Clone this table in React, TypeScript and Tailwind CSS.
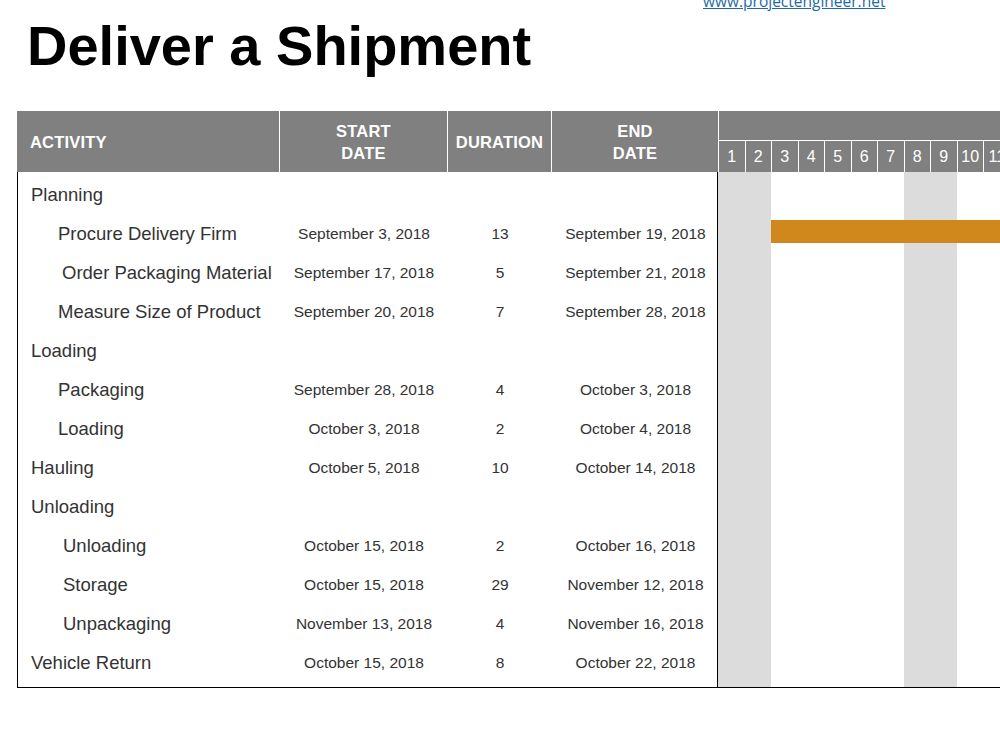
import React from "react";

type Row = {
  name: string;
  indent: string;
  start?: string;
  duration?: string;
  end?: string;
};

const rows: Row[] = [
  { name: "Planning", indent: "pl-[13px]" },
  { name: "Procure Delivery Firm", indent: "pl-[40px]", start: "September 3, 2018", duration: "13", end: "September 19, 2018" },
  { name: "Order Packaging Material", indent: "pl-[44px]", start: "September 17, 2018", duration: "5", end: "September 21, 2018" },
  { name: "Measure Size of Product", indent: "pl-[40px]", start: "September 20, 2018", duration: "7", end: "September 28, 2018" },
  { name: "Loading", indent: "pl-[13px]" },
  { name: "Packaging", indent: "pl-[40px]", start: "September 28, 2018", duration: "4", end: "October 3, 2018" },
  { name: "Loading", indent: "pl-[40px]", start: "October 3, 2018", duration: "2", end: "October 4, 2018" },
  { name: "Hauling", indent: "pl-[13px]", start: "October 5, 2018", duration: "10", end: "October 14, 2018" },
  { name: "Unloading", indent: "pl-[13px]" },
  { name: "Unloading", indent: "pl-[45px]", start: "October 15, 2018", duration: "2", end: "October 16, 2018" },
  { name: "Storage", indent: "pl-[45px]", start: "October 15, 2018", duration: "29", end: "November 12, 2018" },
  { name: "Unpackaging", indent: "pl-[45px]", start: "November 13, 2018", duration: "4", end: "November 16, 2018" },
  { name: "Vehicle Return", indent: "pl-[13px]", start: "October 15, 2018", duration: "8", end: "October 22, 2018" },
];

const days = [1, 2, 3, 4, 5, 6, 7, 8, 9, 10, 11, 12];
const weekend = [1, 2, 8, 9];

export default function App() {
  return (
    <div className="w-[1000px] h-[750px] overflow-hidden bg-white font-['Liberation_Sans',Arial,sans-serif]">
      {/* top area */}
      <div className="h-[111px] flex flex-col">
        <a
          href="#"
          className="ml-[703px] -mt-[8px] h-[19px] leading-[19px] text-[15.5px] text-[#1f6aa5] underline font-['Open_Sans',sans-serif]"
        >
          www.projectengineer.net
        </a>
        <h1 className="ml-[27px] mt-[7px] text-[56px] leading-[56px] font-bold text-black">
          Deliver a Shipment
        </h1>
      </div>

      <div className="ml-[17px] w-[983px] overflow-hidden">
        {/* header */}
        <div className="flex h-[61px] bg-[#808080] text-white font-bold text-[16.5px] tracking-[0.2px] leading-[22px]">
          <div className="w-[263px] shrink-0 border-r border-white flex items-center pl-[13px]">ACTIVITY</div>
          <div className="w-[168px] shrink-0 border-r border-white flex items-center justify-center text-center">
            START<br />DATE
          </div>
          <div className="w-[104px] shrink-0 border-r border-white flex items-center justify-center">DURATION</div>
          <div className="w-[167px] shrink-0 border-r border-white flex items-center justify-center text-center">
            END<br />DATE
          </div>
          <div className="flex-1 flex flex-col">
            <div className="h-[30px] border-b border-white" />
            <div className="flex flex-1 font-normal tracking-normal text-[16px]">
              {days.map((d) => (
                <div key={d} className="w-[26.5px] shrink-0 border-r border-white flex items-center justify-center">
                  {d}
                </div>
              ))}
            </div>
          </div>
        </div>

        {/* body */}
        <div className="flex border-b-[1.5px] border-black">
          <div className="w-[701px] shrink-0 border-l border-r border-black pt-[2px] pb-[5px] text-[#333333]">
            {rows.map((r, i) => (
              <div key={i} className={`flex items-center ${i === 0 ? "h-[40px] pt-[2px]" : "h-[39px]"}`}>
                <div className={`w-[262px] shrink-0 text-[18.5px] ${r.indent}`}>{r.name}</div>
                <div className="w-[168px] shrink-0 text-center text-[15.5px]">{r.start}</div>
                <div className="w-[104px] shrink-0 text-center text-[15.5px]">{r.duration}</div>
                <div className="w-[167px] shrink-0 text-center text-[15.5px]">{r.end}</div>
              </div>
            ))}
          </div>

          <div className="flex-1 relative">
            <div className="absolute inset-0 flex">
              {days.map((d) => (
                <div
                  key={d}
                  className={`w-[26.5px] shrink-0 ${weekend.includes(d) ? "bg-[#dcdcdc]" : "bg-white"}`}
                />
              ))}
            </div>
            <div className="relative pt-[48px] flex">
              <div className="ml-[53px] h-[23px] flex-1 bg-[#d0871c]" />
            </div>
          </div>
        </div>
      </div>
    </div>
  );
}
